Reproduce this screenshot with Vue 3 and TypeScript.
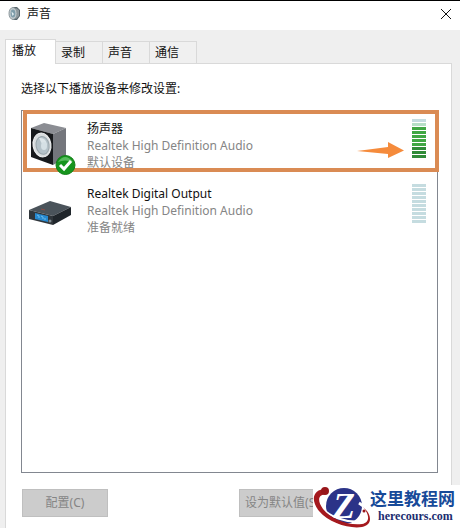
<script setup lang="ts">
import { ref } from 'vue'

interface Device {
  id: string
  name: string
  driver: string
  status: string
  isDefault: boolean
  levels: string[]
}

const tabs = ['播放', '录制', '声音', '通信']
const activeTab = ref(0)
const selected = ref('speakers')

const devices: Device[] = [
  {
    id: 'speakers',
    name: '扬声器',
    driver: 'Realtek High Definition Audio',
    status: '默认设备',
    isDefault: true,
    levels: ['idle', 'fading', 'on', 'on', 'on', 'on', 'on', 'base', 'base', 'base'],
  },
  {
    id: 'digital',
    name: 'Realtek Digital Output',
    driver: 'Realtek High Definition Audio',
    status: '准备就绪',
    isDefault: false,
    levels: Array<string>(10).fill('idle'),
  },
]
</script>

<template>
  <main class="window">
    <header class="titlebar">
      <svg class="app-icon" viewBox="0 0 14 16" aria-hidden="true">
        <path d="M5 1 9 1 12 4V10L9 14 5 14Z" fill="#59666d" />
        <path d="M8 2 11 4V10L8 13Z" fill="#8d989d" />
        <ellipse cx="5" cy="7.500" rx="4" ry="6" fill="#c3cbce" stroke="#8b979c" />
        <ellipse cx="5" cy="7.500" rx="2.400" ry="4" fill="#7f9daa" />
        <path d="M3.500 5.500 6 8 4.500 10Z" fill="#e8f2f5" />
      </svg>
      <h1>声音</h1>
      <button class="close" type="button" aria-label="关闭">
        <svg viewBox="0 0 12 12" aria-hidden="true"><path d="M1 1 11 11M11 1 1 11" /></svg>
      </button>
    </header>

    <nav class="tabs" role="tablist">
      <button
        v-for="(tab, i) in tabs"
        :key="tab"
        type="button"
        role="tab"
        class="tab"
        :class="{ active: i === activeTab }"
        :aria-selected="i === activeTab"
        @click="activeTab = i"
      >{{ tab }}</button>
    </nav>

    <section class="page" role="tabpanel">
      <p id="hint" class="hint">选择以下播放设备来修改设置:</p>
      <div class="list-area">
        <ul class="devices" aria-labelledby="hint">
          <li v-for="d in devices" :key="d.id" class="device" @click="selected = d.id">
            <div class="picture">
              <svg v-if="d.isDefault" viewBox="0 0 48 56" aria-hidden="true">
                <path d="M2 8 15 3 37 8 24 14Z" fill="#8b8d93" />
                <path d="M24 14 37 8V38L24 45Z" fill="#74767c" />
                <path d="M2 8 24 14V45L2 37Z" fill="#17191c" />
                <ellipse cx="13" cy="25" rx="9" ry="12" transform="rotate(-9 13 25)" fill="#d9dddf" stroke="#f1f2f3" />
                <ellipse cx="13.500" cy="25.500" rx="6.500" ry="9" transform="rotate(-9 13 25)" fill="#b4c1c8" stroke="#9aa6ac" />
                <path d="M10 18Q17 17 18 25L14 26Z" fill="#dce5e9" />
                <ellipse cx="15" cy="26" rx="3" ry="4" fill="#d5e0e5" />
                <circle cx="36.500" cy="45" r="9.500" fill="#16951d" stroke="#138019" />
                <path d="M29 42Q36 32 44 42Q36 39 29 42Z" fill="#58bb5d" />
                <path d="M31 45 35 49 42 41" fill="none" stroke="#fff" stroke-width="3" />
              </svg>
              <svg v-else viewBox="0 0 48 56" aria-hidden="true">
                <g transform="translate(0 5)">
                  <path d="M0 20 21 11 42 17 24 26Z" fill="#4a535a" />
                  <path d="M0 20 24 26V35L0 29Z" fill="#30363b" />
                  <path d="M24 26 42 17V25L24 35Z" fill="#20262b" />
                  <path d="M6 23 19 26V32L6 29Z" fill="#2689d0" />
                  <path d="M8 25 10 26V28M12 26 14 27V29M16 28V30" fill="none" stroke="#6fbdea" />
                  <path d="M12 19 16 20" stroke="#8a4c45" />
                  <circle cx="21" cy="31" r="1.500" fill="#7f8b91" />
                </g>
              </svg>
            </div>
            <div class="details">
              <strong>{{ d.name }}</strong>
              <span>{{ d.driver }}</span>
              <span>{{ d.status }}</span>
            </div>
            <div class="meter" role="img" :aria-label="d.name">
              <i v-for="(level, i) in d.levels" :key="i" :class="level"></i>
            </div>
          </li>
        </ul>
        <div class="marker" aria-hidden="true"></div>
        <svg class="arrow" viewBox="0 0 48 17" aria-hidden="true">
          <path d="M0 9 31 5V0L47 8.500 31 16V12Z" fill="#f58b3c" />
        </svg>
      </div>
      <div class="actions">
        <button type="button" disabled>配置(C)</button>
        <button type="button" disabled>设为默认值(S)</button>
      </div>
    </section>

    <aside class="brand">
      <svg class="logo" viewBox="0 0 58 43" aria-hidden="true">
        <circle cx="31" cy="21" r="18" fill="#2b3388" />
        <text class="letter" x="20" y="33">Z</text>
        <path d="M7 20C15 32 32 38 49 36" fill="none" stroke="#fff" stroke-width="2" />
        <path d="M46 18C51 21 55 26 56 31" fill="none" stroke="#fff" stroke-width="3" />
        <path d="M13 4C0 4-3 15 6 26C16 38 36 44 49 42C58 40 59 33 54 26L50 22C56 29 58 37 49 39C36 41 18 34 10 24C4 15 5 10 13 9Z" fill="#a5191e" />
        <circle cx="12" cy="6" r="4" fill="#98161a" />
        <circle cx="51" cy="26" r="1.500" fill="#98161a" />
      </svg>
      <div class="brand-text">
        <b>这里教程网</b>
        <a href="#">herecours.com</a>
      </div>
    </aside>
  </main>
</template>

<style>
body { margin: 0; background: #efefef; }
</style>

<style scoped>
* { box-sizing: border-box; }
.window {
  position: relative;
  display: flex;
  flex-direction: column;
  min-height: 100vh;
  background: #efefef;
  border-top: 1px solid #000;
  color: #111;
  font: 12px/16px "Noto Sans", "Noto Sans CJK SC", sans-serif;
  overflow: hidden;
}
button { font: inherit; }
.titlebar {
  display: flex;
  align-items: center;
  height: 29px;
  padding: 0 8px 3px;
  background: #fff;
}
.app-icon { width: 14px; height: 16px; }
h1 { flex: 1; margin: 0 0 0 5px; font-size: 12px; font-weight: 400; }
.close { display: flex; padding: 0; border: 0; background: none; }
.close svg { width: 12px; height: 12px; stroke: #111; stroke-width: 1; fill: none; }
.tabs {
  display: flex;
  align-items: flex-end;
  height: 33px;
  padding-left: 5px;
}
.tab {
  width: 47px;
  height: 22px;
  padding: 0 5px;
  border: 1px solid #d9d9d9;
  border-width: 1px 1px 0 0;
  background: #f0f0f0;
  color: #111;
  text-align: left;
}
.tab.active {
  z-index: 1;
  width: 51px;
  height: 25px;
  margin-bottom: -1px;
  padding: 0 6px 2px;
  border-left-width: 1px;
  background: #fff;
}
.page {
  flex: 1;
  display: flex;
  flex-direction: column;
  margin: 0 8px 0 5px;
  padding: 17px 13px 11px 15px;
  border: 1px solid #d9d9d9;
  border-bottom: 0;
  background: #fff;
}
.hint { margin: 0 0 13px; }
.list-area { position: relative; display: flex; flex: 1; }
.devices {
  flex: 1;
  margin: 0;
  padding: 8px 11px 8px 7px;
  border: 1px solid #828790;
  list-style: none;
}
.device { display: flex; height: 65px; }
.picture { position: relative; z-index: 1; width: 58px; padding-top: 1px; }
.picture svg { display: block; width: 48px; height: 56px; }
.details {
  display: flex;
  flex: 1;
  flex-direction: column;
  padding-top: 1px;
  line-height: 17px;
  color: #858585;
}
.details strong { color: #111; font-weight: 400; }
.meter { display: grid; align-content: start; gap: 1px; }
.meter i { width: 14px; height: 3px; background: #c5dce0; }
.meter .fading { background: #b6dfc6; }
.meter .on { background: #40a743; }
.meter .base { background: #308b38; }
.marker {
  position: absolute;
  inset: 0 -1px auto 2px;
  height: 62px;
  border: 4px solid #da8b54;
}
.arrow { position: absolute; top: 32px; right: 33px; width: 48px; height: 17px; }
.actions { display: flex; gap: 131px; padding: 16px 0 0 1px; }
.actions button {
  flex: none;
  width: 86px;
  height: 28px;
  padding: 0 4px;
  border: 1px solid #bfbfbf;
  background: #ccc;
  color: #858585;
  white-space: nowrap;
}
.brand {
  position: absolute;
  right: 0;
  bottom: 0;
  z-index: 2;
  display: flex;
  width: 147px;
  height: 43px;
  background: #fff;
}
.logo { flex: none; width: 58px; height: 43px; }
.letter { fill: #fff; font: italic 700 36px "Liberation Serif", serif; }
.brand-text { display: flex; flex-direction: column; margin-left: -1px; color: #174a99; }
.brand-text b { padding-top: 2px; font: 700 17px/22px "Noto Sans CJK SC", sans-serif; white-space: nowrap; }
.brand-text a {
  padding-left: 8px;
  color: #202d70;
  font: 700 12px/14px "Liberation Serif", serif;
  text-decoration: none;
}
</style>
